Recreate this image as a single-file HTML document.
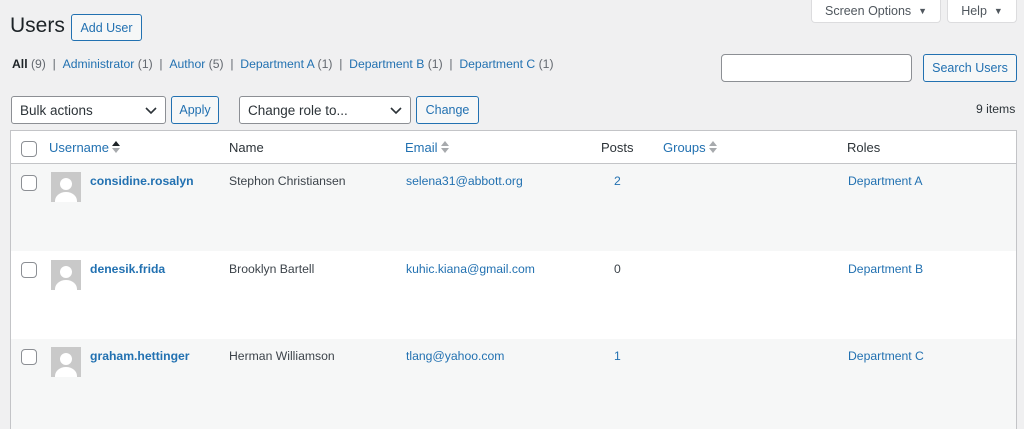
<!DOCTYPE html>
<html><head><style>
*{box-sizing:border-box;margin:0;padding:0}
body{width:1024px;height:425px;overflow:hidden;background:#f0f0f1;font-family:"Liberation Sans",Arial,sans-serif;font-size:12.2px;color:#3c434a;position:relative}
.a{position:absolute;white-space:nowrap}
a,.l{color:#2271b1;text-decoration:none}
.btn{position:absolute;border:1px solid #2271b1;color:#2271b1;background:#f6f7f7;border-radius:3px;font-size:12.5px;display:flex;align-items:center;justify-content:center}
.sel{position:absolute;border:1px solid #8c8f94;background:#fff;border-radius:3px;font-size:13.5px;color:#2c3338;display:flex;align-items:center;padding-left:8px}
.sel svg{position:absolute;right:8px;top:10px}
.tab{position:absolute;top:0;height:23px;background:#fff;border:1px solid #dcdcde;border-top:none;border-radius:0 0 4px 4px;color:#50575e;font-size:12.5px;display:flex;align-items:center;justify-content:center}
.cb{position:absolute;width:16px;height:16px;border:1px solid #8c8f94;border-radius:4px;background:#fff}
.av{position:absolute;width:30px;height:30px;background:#c9c9c9;overflow:hidden}
.av:before{content:"";position:absolute;left:9px;top:6px;width:12px;height:12px;border-radius:50%;background:#fff}
.av:after{content:"";position:absolute;left:4px;top:20px;width:22px;height:18px;border-radius:50% 50% 0 0;background:#fff}
.row{position:absolute;left:10px;width:1007px;border-left:1px solid #c3c4c7;border-right:1px solid #c3c4c7}
.un{font-weight:bold;color:#2271b1}
.sa{display:inline-block;vertical-align:-1px;margin-left:3px}
</style></head><body>
<div class="tab" style="left:811px;width:130px">Screen Options &nbsp;<span style="font-size:9px">▼</span></div>
<div class="tab" style="left:947px;width:70px">Help &nbsp;<span style="font-size:9px">▼</span></div>
<div class="a" style="left:10px;top:14px;font-size:21px;color:#1d2327">Users</div>
<div class="btn" style="left:71px;top:14px;width:71px;height:27px">Add User</div>
<div class="a" style="left:12px;top:57px;color:#646970"><b style="color:#1d2327">All</b> (9) &nbsp;| &nbsp;<a>Administrator</a> (1) &nbsp;| &nbsp;<a>Author</a> (5) &nbsp;| &nbsp;<a>Department A</a> (1) &nbsp;| &nbsp;<a>Department B</a> (1) &nbsp;| &nbsp;<a>Department C</a> (1)</div>
<div class="a" style="left:721px;top:54px;width:191px;height:28px;background:#fff;border:1px solid #8c8f94;border-radius:4px"></div>
<div class="btn" style="left:923px;top:54px;width:94px;height:28px">Search Users</div>
<div class="sel" style="left:11px;top:96px;width:155px;height:28px">Bulk actions<svg width="12" height="8"><path d="M1 1l5 5 5-5" stroke="#2c3338" stroke-width="1.6" fill="none"/></svg></div>
<div class="btn" style="left:171px;top:96px;width:48px;height:28px">Apply</div>
<div class="sel" style="left:239px;top:96px;width:172px;height:28px">Change role to...<svg width="12" height="8"><path d="M1 1l5 5 5-5" stroke="#2c3338" stroke-width="1.6" fill="none"/></svg></div>
<div class="btn" style="left:416px;top:96px;width:63px;height:28px">Change</div>
<div class="a" style="left:976px;top:102px;color:#2c3338">9 items</div>
<div class="row" style="top:130px;height:34px;background:#fff;border-top:1px solid #c3c4c7;border-bottom:1px solid #c3c4c7;font-size:13px;color:#2c3338">
 <div class="cb" style="left:10px;top:10px"></div>
 <div class="a l" style="left:38px;top:9px">Username<svg class="sa" width="8" height="12"><path d="M0 5L4 0 8 5z" fill="#1d2327"/><path d="M0 7L4 12 8 7z" fill="#a7aaad"/></svg></div>
 <div class="a" style="left:218px;top:9px">Name</div>
 <div class="a l" style="left:394px;top:9px">Email<svg class="sa" width="8" height="12"><path d="M0 5L4 0 8 5z" fill="#a7aaad"/><path d="M0 7L4 12 8 7z" fill="#a7aaad"/></svg></div>
 <div class="a" style="left:590px;top:9px">Posts</div>
 <div class="a l" style="left:652px;top:9px">Groups<svg class="sa" width="8" height="12"><path d="M0 5L4 0 8 5z" fill="#a7aaad"/><path d="M0 7L4 12 8 7z" fill="#a7aaad"/></svg></div>
 <div class="a" style="left:836px;top:9px">Roles</div>
</div>
<div class="row" style="top:164px;height:87px;background:#f6f7f7">
 <div class="cb" style="left:10px;top:11px"></div><div class="av" style="left:40px;top:8px"></div>
 <div class="a un" style="left:79px;top:10px">considine.rosalyn</div>
 <div class="a" style="left:218px;top:10px">Stephon Christiansen</div>
 <div class="a l" style="left:395px;top:10px">selena31@abbott.org</div>
 <div class="a l" style="left:603px;top:10px">2</div>
 <div class="a l" style="left:837px;top:10px">Department A</div>
</div>
<div class="row" style="top:251px;height:88px;background:#fff">
 <div class="cb" style="left:10px;top:11px"></div><div class="av" style="left:40px;top:9px"></div>
 <div class="a un" style="left:79px;top:11px">denesik.frida</div>
 <div class="a" style="left:218px;top:11px">Brooklyn Bartell</div>
 <div class="a l" style="left:395px;top:11px">kuhic.kiana@gmail.com</div>
 <div class="a" style="left:603px;top:11px">0</div>
 <div class="a l" style="left:837px;top:11px">Department B</div>
</div>
<div class="row" style="top:339px;height:90px;background:#f6f7f7">
 <div class="cb" style="left:10px;top:10px"></div><div class="av" style="left:40px;top:8px"></div>
 <div class="a un" style="left:79px;top:10px">graham.hettinger</div>
 <div class="a" style="left:218px;top:10px">Herman Williamson</div>
 <div class="a l" style="left:395px;top:10px">tlang@yahoo.com</div>
 <div class="a l" style="left:603px;top:10px">1</div>
 <div class="a l" style="left:837px;top:10px">Department C</div>
</div>
</body></html>
